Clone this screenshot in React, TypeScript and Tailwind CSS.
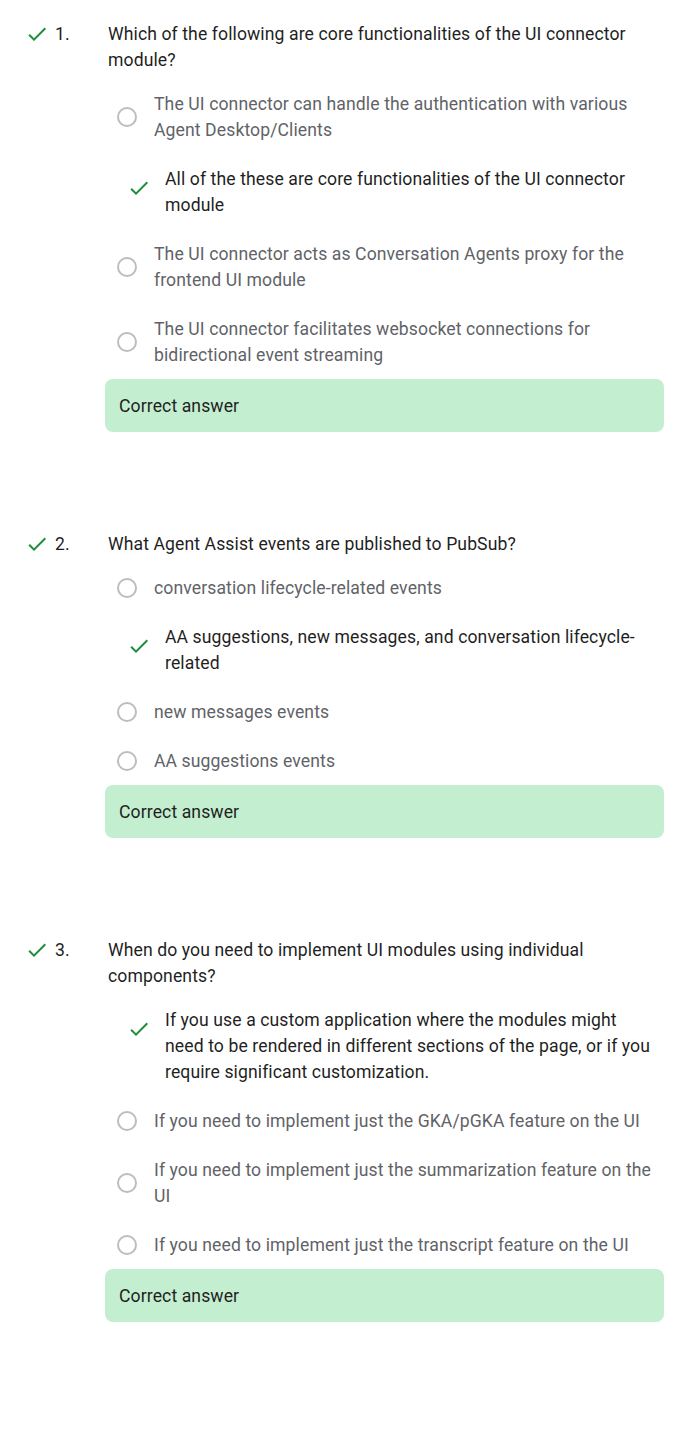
import React from "react";

type Opt = { text: string; correct?: boolean };
type Q = { n: number; q: string; opts: Opt[] };

const data: Q[] = [
  {
    n: 1,
    q: "Which of the following are core functionalities of the UI connector module?",
    opts: [
      { text: "The UI connector can handle the authentication with various Agent Desktop/Clients" },
      { text: "All of the these are core functionalities of the UI connector module", correct: true },
      { text: "The UI connector acts as Conversation Agents proxy for the frontend UI module" },
      { text: "The UI connector facilitates websocket connections for bidirectional event streaming" },
    ],
  },
  {
    n: 2,
    q: "What Agent Assist events are published to PubSub?",
    opts: [
      { text: "conversation lifecycle-related events" },
      { text: "AA suggestions, new messages, and conversation lifecycle-related", correct: true },
      { text: "new messages events" },
      { text: "AA suggestions events" },
    ],
  },
  {
    n: 3,
    q: "When do you need to implement UI modules using individual components?",
    opts: [
      {
        text: "If you use a custom application where the modules might need to be rendered in different sections of the page, or if you require significant customization.",
        correct: true,
      },
      { text: "If you need to implement just the GKA/pGKA feature on the UI" },
      { text: "If you need to implement just the summarization feature on the UI" },
      { text: "If you need to implement just the transcript feature on the UI" },
    ],
  },
];

function Check() {
  return (
    <svg width="24" height="24" viewBox="0 0 24 24" className="shrink-0">
      <path d="M9 16.17L4.83 12l-1.42 1.41L9 19 21 7l-1.41-1.41z" fill="#1e8e3e" />
    </svg>
  );
}

export default function App() {
  return (
    <div
      className="min-h-[1435px] bg-white pt-[21px] pl-[25px] pr-[27px] text-[17.6px] leading-[26px] tracking-[0.1px] text-[#1f1f1f]"
      style={{ fontFamily: "Roboto, 'Noto Sans', sans-serif" }}
    >
      {data.map((item) => (
        <div key={item.n} className="flex mb-[99px]">
          <div className="w-[80px] shrink-0 flex items-start">
            <div className="mt-[1px]">
              <Check />
            </div>
            <span className="ml-[6px]">{item.n}.</span>
          </div>
          <div className="flex-1 min-w-0">
            <div className="pl-[3px] pr-[9px]">{item.q}</div>
            <div className="mt-[18px] flex flex-col gap-[23px] pl-[12px]">
              {item.opts.map((o, i) =>
                o.correct ? (
                  <div key={i} className="flex items-start">
                    <div className="ml-[10px] mt-[10px]">
                      <Check />
                    </div>
                    <div className="ml-[14px] flex-1 pr-[9px] text-[#1f1f1f]">{o.text}</div>
                  </div>
                ) : (
                  <div key={i} className="flex items-center">
                    <div className="w-[20px] h-[20px] shrink-0 rounded-full border-2 border-[#bdbdbd]" />
                    <div className="ml-[17px] flex-1 pr-[9px] text-[#5f6368]">{o.text}</div>
                  </div>
                )
              )}
            </div>
            <div className="mt-[11px] h-[53px] rounded-lg bg-[#c4eed0] flex items-center px-[14px] text-[#1f1f1f]">
              Correct answer
            </div>
          </div>
        </div>
      ))}
    </div>
  );
}
